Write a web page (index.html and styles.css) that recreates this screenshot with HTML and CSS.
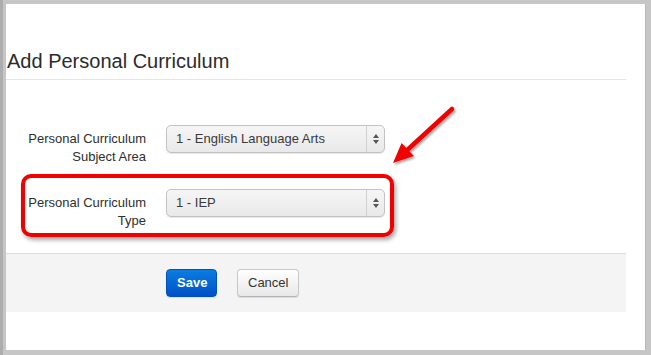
FILE: index.html
```html
<!DOCTYPE html>
<html lang="en">
    <head>
        <meta charset="utf-8"/>
        <title>Add Personal Curriculum</title>
        <link rel="stylesheet" href="styles.css">
    </head>
    <body>
        <div class="screen">
            <div class="page">
                <div class="modal">
                    <div class="modalHeader">
                        <h3>Add Personal Curriculum</h3>
                    </div>

                    <div class="modalBody">
                        <div class="row">
                            <label>Personal Curriculum<br>Subject Area</label>
                            <div class="select">
                                <span>1 - English Language Arts</span>
                                <div class="caret">
                                    <svg width="6" height="12" viewBox="0 0 6 12"><polygon points="0,5 3,1 6,5" fill="#555"/><polygon points="0,7 6,7 3,11" fill="#555"/></svg>
                                </div>
                            </div>
                        </div>

                        <div class="row">
                            <label>Personal Curriculum<br>Type</label>
                            <div class="select">
                                <span>1 - IEP</span>
                                <div class="caret">
                                    <svg width="6" height="12" viewBox="0 0 6 12"><polygon points="0,5 3,1 6,5" fill="#555"/><polygon points="0,7 6,7 3,11" fill="#555"/></svg>
                                </div>
                            </div>
                        </div>
                    </div>

                    <div class="modalFooter">
                        <button class="btn primary">Save</button>
                        <button class="btn">Cancel</button>
                    </div>
                </div>

                <div class="highlight"></div>

                <svg class="pointer" width="90" height="80" viewBox="0 0 90 80">
                    <defs>
                        <filter id="shade" x="-20%" y="-20%" width="150%" height="150%">
                            <feDropShadow dx="1.5" dy="2" stdDeviation="1.2" flood-color="#000" flood-opacity="0.35"/>
                        </filter>
                    </defs>
                    <g filter="url(#shade)">
                        <line x1="66" y1="15" x2="18" y2="59" stroke="#f20000" stroke-width="4.5" stroke-linecap="round"/>
                        <polygon points="7,69 15.6,48.9 27.8,62.1" fill="#f20000"/>
                    </g>
                </svg>
            </div>
        </div>
    </body>
</html>
```

FILE: styles.css
```css
*{margin:0;padding:0;box-sizing:border-box;}

body{
    font-family: "Liberation Sans", Arial, sans-serif;
    font-size: 13px;
    color: #333;
}

.screen{
    width: 651px;
    height: 355px;
    padding: 4px 5px 5px 3px;
    background: #c6c6c6;
    border-left: 3px solid #adadad;
}

.page{
    position: relative;
    height: 100%;
    background: white;
    border-right: 1px solid #b8b8b8;
}

.modal{
    width: 620px;
}

.modalHeader{
    padding: 45px 0 6px 1px;
    border-bottom: 1px solid #e5e5e5;
}

.modalHeader h3{
    font-size: 20px;
    font-weight: normal;
    line-height: 24px;
    color: #2b2b2b;
}

.modalBody{
    padding: 45px 0 23px 0;
}

.row{
    display: flex;
    align-items: flex-start;
    gap: 20px;
    margin-bottom: 23px;
}

.row:last-child{
    margin-bottom: 0;
}

label{
    width: 140px;
    padding-top: 5px;
    text-align: right;
    line-height: 18px;
    color: #2e2e2e;
}

.select{
    display: flex;
    width: 219px;
    height: 28px;
    border: 1px solid #c2c2c2;
    border-radius: 5px;
    background: linear-gradient(#f6f6f6, #e9e9e9);
    box-shadow: 0 1px 1px #0000001a;
}

.select span{
    flex: 1;
    padding: 4px 0 0 9px;
    line-height: 18px;
    color: #3a3a3a;
}

.caret{
    display: flex;
    justify-content: center;
    align-items: center;
    width: 18px;
    border-left: 1px solid #d0d0d0;
}

.modalFooter{
    display: flex;
    gap: 20px;
    padding: 15px 0 15px 160px;
    border-top: 1px solid #dddddd;
    background: #f4f4f4;
}

.btn{
    height: 28px;
    padding: 4px 10px;
    font-family: "Liberation Sans", Arial, sans-serif;
    font-size: 13px;
    line-height: 18px;
    color: #333;
    border: 1px solid #c8c8c8;
    border-bottom-color: #b3b3b3;
    border-radius: 4px;
    background: linear-gradient(#ffffff, #e8e8e8);
    box-shadow: 0 1px 1px #0000001a;
}

.primary{
    width: 51px;
    font-weight: bold;
    color: white;
    border-color: #0052b8;
    background: linear-gradient(#0a7de0, #0050c8);
}

.highlight{
    position: absolute;
    left: 15px;
    top: 170px;
    width: 373px;
    height: 63px;
    border: 4px solid #f20000;
    border-radius: 10px;
    box-shadow: 2px 3px 4px #00000059;
}

.pointer{
    position: absolute;
    left: 380px;
    top: 90px;
}
```
